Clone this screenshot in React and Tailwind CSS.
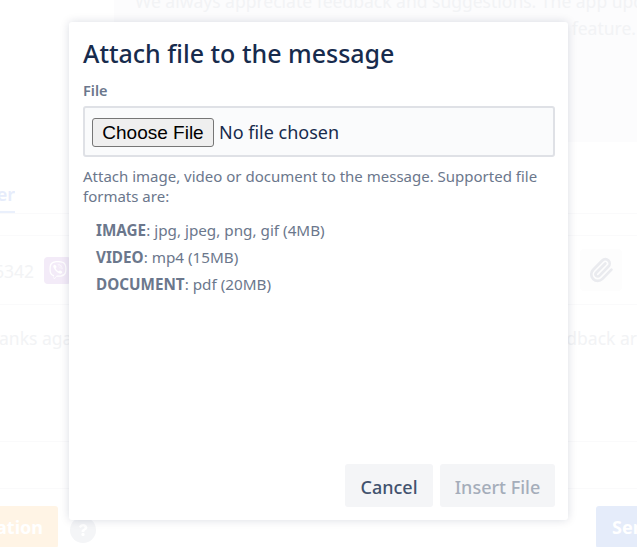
import React from 'react';
import { FaViber, FaQuestion } from 'react-icons/fa';
import { Paperclip } from 'lucide-react';

function Backdrop() {
    return (
        <div className="h-[547px] overflow-hidden flex flex-col text-[#f2f3f5] text-[17.5px]">
            <div className="h-[142px] shrink-0 ml-[114px] bg-[#fcfcfd] pl-[21px] overflow-hidden">
                <p className="whitespace-nowrap leading-[27px] -mt-[12px]">We always appreciate feedback and suggestions. The app updates</p>
                <p className="text-right leading-[27px] pr-[1px]">feature.</p>
            </div>
            <div className="h-[72px] shrink-0 border-b border-[#fafafb] flex items-end">
                <div className="w-[15px] h-[32px] border-b-2 border-[#eaf0fc] text-[#e6ecfb] font-semibold text-[18px] overflow-hidden flex justify-end">
                    <span>er</span>
                </div>
            </div>
            <div className="h-[22px] shrink-0 border-b border-[#fafafb]" />
            <div className="h-[69px] shrink-0 border-b border-[#fafafb] flex items-center justify-between pr-[15px]">
                <div className="flex items-center gap-[10px] -ml-[6px]">
                    <span className="leading-none pt-[4px]">6342</span>
                    <span className="w-[27px] h-[27px] rounded-[4px] bg-[#f3ebf8] flex items-center justify-center text-white">
                        <FaViber className="w-[18px] h-[18px]" />
                    </span>
                </div>
                <span className="w-[42px] h-[42px] rounded-[4px] bg-[#fdfdfd] flex items-center justify-center text-[#eaebef]">
                    <Paperclip className="w-[26px] h-[26px]" strokeWidth={2.5} />
                </span>
            </div>
            <div className="h-[66px] shrink-0 flex items-center justify-between whitespace-nowrap">
                <span className="-ml-[1px]">anks aga</span>
                <span>dback ar</span>
            </div>
            <div className="h-[71px] shrink-0 border-b border-[#fafafb]" />
            <div className="h-[47px] shrink-0 border-b border-[#fafafb]" />
            <div className="flex justify-between items-start mt-[17px]">
                <div className="flex items-start gap-[12px]">
                    <div className="w-[58px] h-[42px] rounded-r-[3px] bg-[#fff4e5] text-white font-bold text-[18px] flex items-center justify-end pr-[15px]">ation</div>
                    <div className="w-[26px] h-[26px] mt-[11px] rounded-full bg-[#f4f5f7] flex items-center justify-center text-white">
                        <FaQuestion className="w-[12px] h-[12px]" />
                    </div>
                </div>
                <div className="w-[41px] h-[42px] rounded-l-[3px] bg-[#e5ecfa] text-white font-bold text-[18px] pl-[16px] leading-[42px] overflow-hidden">Send</div>
            </div>
        </div>
    );
}

function AttachModal() {
    return (
        <div className="absolute left-[69px] top-[22px] w-[499px] h-[498px] bg-white rounded-[3px] shadow-[0_0_10px_rgba(9,30,66,0.15)] pl-[14px] pr-[13px] flex flex-col">
            <h1 className="text-[25px] leading-[30px] font-medium text-[#172b4d] mt-[16px]">Attach file to the message</h1>
            <label className="text-[14.5px] leading-[20px] font-semibold text-[#6b778c] mt-[12px]">File</label>
            <div className="mt-[6px] h-[51px] border-2 border-[#dfe1e6] bg-[#fafbfc] rounded-[3px] flex items-center pl-[7px] pt-[1px]">
                <input
                    type="file"
                    className="text-[18px] text-[#172b4d] w-full file:font-['Liberation_Sans'] file:text-[19px] file:text-black file:bg-[#efefef] file:border file:border-[#767676] file:rounded-[3px] file:h-[29px] file:w-[122px] file:mr-[5px]"
                />
            </div>
            <p className="text-[15px] leading-[20px] text-[#6b778c] mt-[9px]">Attach image, video or document to the message. Supported file formats are:</p>
            <ul className="text-[15.25px] leading-[27px] text-[#6b778c] mt-[11px] pl-[13px]">
                <li><b className="font-bold">IMAGE</b>: jpg, jpeg, png, gif (4MB)</li>
                <li><b className="font-bold">VIDEO</b>: mp4 (15MB)</li>
                <li><b className="font-bold">DOCUMENT</b>: pdf (20MB)</li>
            </ul>
            <div className="mt-auto mb-[13px] flex justify-end gap-[7px]">
                <button className="w-[88px] h-[43px] pt-[3px] rounded-[3px] bg-[#f4f5f7] text-[18px] font-medium text-[#42526e]">Cancel</button>
                <button disabled className="w-[115px] h-[43px] pt-[3px] rounded-[3px] bg-[#f4f5f7] text-[18px] font-medium text-[#a5adba]">Insert File</button>
            </div>
        </div>
    );
}

export default function App() {
    return (
        <div className="relative w-[637px] h-[547px] overflow-hidden bg-white font-['Noto_Sans',sans-serif]">
            <Backdrop />
            <AttachModal />
        </div>
    );
}
